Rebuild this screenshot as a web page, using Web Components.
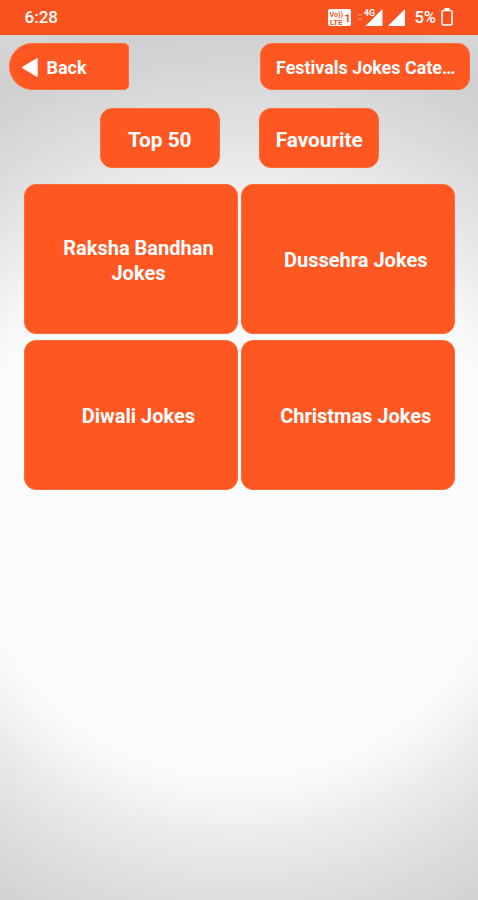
<!DOCTYPE html>
<html lang="en">
<head>
<meta charset="utf-8">
<meta name="viewport" content="width=device-width, initial-scale=1">
<title>Festivals Jokes</title>
<style>
    html, body {
        margin: 0;
        height: 100%;
    }

    body {
        font-family: Roboto, 'Liberation Sans', sans-serif;
        color: #fff;
        overflow: hidden;
    }
</style>
</head>
<body>
<jokes-screen>
    <status-bar slot="status" time="6:28" battery="5%"></status-bar>
    <back-button slot="header">Back</back-button>
    <screen-title slot="header">Festivals Jokes Cate…</screen-title>
    <action-button slot="actions">Top 50</action-button>
    <action-button slot="actions">Favourite</action-button>
    <category-tile>Raksha Bandhan Jokes</category-tile>
    <category-tile>Dussehra Jokes</category-tile>
    <category-tile>Diwali Jokes</category-tile>
    <category-tile>Christmas Jokes</category-tile>
</jokes-screen>

<script>
/* Base class: puts the static template of each element in an open root */
class BaseElement extends HTMLElement {
    constructor() {
        super();
        this.attachShadow({ mode: 'open' });
    }

    connectedCallback() {
        this.shadowRoot.innerHTML = this.template();
    }
}

class JokesScreen extends BaseElement {
    template() {
        return `
            <style>
                :host {
                    --accent: #ff5722;
                    --edge: #ff6a38;
                    display: flex;
                    flex-direction: column;
                    height: 900px;
                    background:
                        radial-gradient(circle at 50% 506px,
                            #fbfbfb 0, #fbfbfb 268px, #f5f5f5 300px, #ebebeb 334px,
                            #dedede 394px, #d3d3d3 455px, #d0d0d0 485px, #d7d7d7 530px);
                }

                header {
                    display: flex;
                    justify-content: space-between;
                    padding: 8px 8px 0 9px;
                }

                .actions {
                    display: flex;
                    justify-content: center;
                    gap: 39.5px;
                    padding: 17.5px 0 16px 1px;
                }

                main {
                    display: grid;
                    grid-template-columns: 1fr 1fr;
                    gap: 6px 3.4px;
                    padding: 0 22.8px 0 24px;
                }
            </style>
            <slot name="status"></slot>
            <header><slot name="header"></slot></header>
            <div class="actions"><slot name="actions"></slot></div>
            <main><slot></slot></main>
        `;
    }
}

class StatusBar extends BaseElement {
    template() {
        return `
            <style>
                :host {
                    display: flex;
                    align-items: center;
                    justify-content: space-between;
                    box-sizing: border-box;
                    height: 34.5px;
                    padding: 0 25px 0 24.5px;
                    background: #fa521e;
                    font-size: 17px;
                    font-weight: 500;
                }

                .icons {
                    display: flex;
                    align-items: center;
                }

                svg {
                    display: block;
                    fill: #fff;
                }

                .volte { margin-right: 7px; }
                .signal { margin-right: 5px; }
                .battery { margin-left: 5px; }
                .level { margin-left: 8.5px; font-size: 16.5px; }
            </style>
            <span>${this.getAttribute('time')}</span>
            <div class="icons">
                <svg class="volte" width="23" height="17" viewBox="0 0 23 17">
                    <rect width="23" height="17" rx="2"/>
                    <g fill="#fa521e" font-family="Roboto, sans-serif" font-weight="700">
                        <text x="1.5" y="7.5" font-size="6.5" textLength="13.5" lengthAdjust="spacingAndGlyphs">Vo))</text>
                        <text x="2" y="15.5" font-size="6.5" textLength="12.5" lengthAdjust="spacingAndGlyphs">LTE</text>
                        <text x="16.2" y="13" font-size="11" textLength="5">1</text>
                    </g>
                </svg>
                <svg class="signal" width="25" height="19" viewBox="0 0 25 19">
                    <path d="M0 6h4v1.5H0ZM0 10.5h4V12H0Z" opacity=".35"/>
                    <path d="M24.5 1V18H7.5L17 8.5Z"/>
                    <text x="6" y="8" font-size="8.5" font-weight="700" textLength="11"
                        lengthAdjust="spacingAndGlyphs" font-family="Roboto, sans-serif">4G</text>
                </svg>
                <svg width="18" height="19" viewBox="0 0 18 19">
                    <path d="M17 1V18H0Z"/>
                </svg>
                <span class="level">${this.getAttribute('battery')}</span>
                <svg class="battery" width="12" height="18" viewBox="0 0 12 18">
                    <path d="M3.5 0h5v2h-5Z"/>
                    <rect x="1" y="2.5" width="10" height="14.5" rx="1.5"
                        fill="none" stroke="#fff" stroke-width="1.6"/>
                </svg>
            </div>
        `;
    }
}

class BackButton extends BaseElement {
    template() {
        return `
            <style>
                :host {
                    display: flex;
                    align-items: center;
                    gap: 9px;
                    box-sizing: border-box;
                    width: 120px;
                    height: 47.5px;
                    padding: 2px 0 0 11.5px;
                    border: 1px solid var(--edge);
                    border-radius: 24px 5px 5px 24px;
                    background: var(--accent);
                    font-size: 18px;
                    font-weight: 700;
                }

                svg { display: block; fill: #fff; stroke: #fff; }
            </style>
            <svg width="16" height="19" viewBox="0 0 16 19">
                <path d="M1 9.5L15 1V18Z" stroke-width="1.5" stroke-linejoin="round"/>
            </svg>
            <span><slot></slot></span>
        `;
    }
}

class ScreenTitle extends BaseElement {
    template() {
        return `
            <style>
                :host {
                    display: flex;
                    align-items: center;
                    box-sizing: border-box;
                    width: 210px;
                    height: 47.5px;
                    padding: 2px 0 0 15px;
                    border: 1px solid var(--edge);
                    border-radius: 12px;
                    background: var(--accent);
                    font-size: 17.9px;
                    font-weight: 700;
                    white-space: nowrap;
                }
            </style>
            <slot></slot>
        `;
    }
}

class ActionButton extends BaseElement {
    template() {
        return `
            <style>
                :host {
                    display: flex;
                    align-items: center;
                    justify-content: center;
                    box-sizing: border-box;
                    width: 120px;
                    height: 60px;
                    padding-top: 4px;
                    border: 1px solid var(--edge);
                    border-radius: 12px;
                    background: var(--accent);
                    font-size: 20.8px;
                    font-weight: 700;
                }
            </style>
            <slot></slot>
        `;
    }
}

class CategoryTile extends BaseElement {
    template() {
        return `
            <style>
                :host {
                    display: flex;
                    align-items: center;
                    justify-content: center;
                    box-sizing: border-box;
                    height: 150px;
                    padding: 4px 15px 0 30px;
                    border: 1px solid var(--edge);
                    border-radius: 12px;
                    background: var(--accent);
                    font-size: 20px;
                    font-weight: 700;
                    line-height: 25px;
                    text-align: center;
                }
            </style>
            <span><slot></slot></span>
        `;
    }
}

customElements.define('jokes-screen', JokesScreen);
customElements.define('status-bar', StatusBar);
customElements.define('back-button', BackButton);
customElements.define('screen-title', ScreenTitle);
customElements.define('action-button', ActionButton);
customElements.define('category-tile', CategoryTile);
</script>
</body>
</html>
